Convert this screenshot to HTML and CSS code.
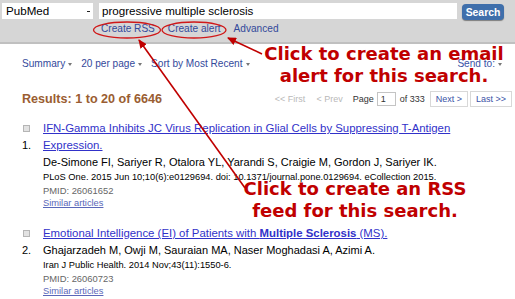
FILE: index.html
```html
<!DOCTYPE html>
<html lang="en">
<head>
    <meta charset="UTF-8">
    <title>PubMed - progressive multiple sclerosis</title>
    <link rel="stylesheet" href="styles.css">
</head>
<body>
    <div class="page">
        <div class="searchbar">
            <div class="search-row">
                <div class="db-select">PubMed<span class="db-caret"></span></div>
                <div class="search-input">progressive multiple sclerosis</div>
                <button class="search-btn">Search</button>
            </div>
            <div class="search-links">
                <a href="#">Create RSS</a>
                <a href="#">Create alert</a>
                <a href="#">Advanced</a>
            </div>
        </div>

        <div class="toolbar">
            <div class="display-opts">
                <a href="#">Summary<span class="caret"></span></a>
                <a href="#">20 per page<span class="caret"></span></a>
                <a href="#">Sort by Most Recent<span class="caret"></span></a>
            </div>
            <a href="#" class="send-to">Send to:<span class="caret"></span></a>
        </div>

        <div class="results-bar">
            <h3 class="result-count">Results: 1 to 20 of 6646</h3>
            <div class="pager">
                <span class="pager-off">&lt;&lt; First</span>
                <span class="pager-off">&lt; Prev</span>
                <span>Page</span>
                <span class="page-input">1</span>
                <span>of 333</span>
                <a href="#" class="pager-btn">Next &gt;</a>
                <a href="#" class="pager-btn">Last &gt;&gt;</a>
            </div>
        </div>

        <div class="rslt">
            <div class="rslt-side">
                <span class="chk"></span>
                <span class="num">1.</span>
            </div>
            <div class="rslt-body">
                <a href="#" class="title">IFN-Gamma Inhibits JC Virus Replication in Glial Cells by Suppressing T-Antigen Expression.</a>
                <p class="authors">De-Simone FI, Sariyer R, Otalora YL, Yarandi S, Craigie M, Gordon J, Sariyer IK.</p>
                <p class="source">PLoS One. 2015 Jun 10;10(6):e0129694. doi: 10.1371/journal.pone.0129694. eCollection 2015.</p>
                <p class="pmid">PMID: 26061652</p>
                <a href="#" class="similar">Similar articles</a>
            </div>
        </div>

        <div class="rslt">
            <div class="rslt-side">
                <span class="chk"></span>
                <span class="num">2.</span>
            </div>
            <div class="rslt-body">
                <a href="#" class="title">Emotional Intelligence (EI) of Patients with <b>Multiple Sclerosis</b> (MS).</a>
                <p class="authors">Ghajarzadeh M, Owji M, Sauraian MA, Naser Moghadasi A, Azimi A.</p>
                <p class="source">Iran J Public Health. 2014 Nov;43(11):1550-6.</p>
                <p class="pmid">PMID: 26060723</p>
                <a href="#" class="similar">Similar articles</a>
            </div>
        </div>

        <!-- annotation overlay -->
        <svg class="arrows" width="515" height="299" viewBox="0 0 515 299">
            <defs>
                <marker id="head" markerWidth="9" markerHeight="8" refX="8" refY="4" orient="auto" markerUnits="userSpaceOnUse">
                    <path d="M0,0 L9,4 L0,8 Z" fill="#c00000"/>
                </marker>
            </defs>
            <ellipse cx="127" cy="30" rx="33.5" ry="8" fill="none" stroke="#d01818" stroke-width="1.3"/>
            <ellipse cx="194" cy="30" rx="32" ry="8" fill="none" stroke="#d01818" stroke-width="1.3"/>
            <line x1="245" y1="188" x2="139" y2="40" stroke="#c00000" stroke-width="1.6" marker-end="url(#head)"/>
            <line x1="262" y1="54" x2="228" y2="38" stroke="#c00000" stroke-width="1.6" marker-end="url(#head)"/>
        </svg>
        <div class="note note-alert">Click to create an email<br>alert for this search.</div>
        <div class="note note-rss">Click to create an RSS<br>feed for this search.</div>
    </div>
</body>
</html>
```

FILE: styles.css
```css
body {
    margin: 0;
    font-family: "Liberation Sans", Arial, sans-serif;
    color: #000;
    background: #fff;
}
a {
    color: #33499b;
    text-decoration: none;
}
p {
    margin: 0;
}
.page {
    position: relative;
    width: 515px;
    height: 299px;
    overflow: hidden;
}

/* search bar */
.searchbar {
    height: 42px;
    background: #d6d6d6;
    border-bottom: 2px solid #c0c0c0;
}
.search-row {
    display: flex;
    align-items: flex-start;
    padding: 3px 0 0 2px;
}
.db-select {
    position: relative;
    width: 87px;
    height: 16px;
    padding-left: 4px;
    background: #fff;
    font-size: 11.6px;
    line-height: 16px;
}
.db-caret {
    position: absolute;
    right: 3px;
    top: 8px;
    width: 3px;
    height: 1px;
    border-top: 1px solid #222;
}
.search-input {
    width: 355px;
    height: 16px;
    margin-left: 6px;
    padding-left: 3px;
    background: #fff;
    font-size: 11.6px;
    line-height: 16px;
}
.search-btn {
    width: 42px;
    height: 16px;
    margin: 1px 0 0 5px;
    padding: 0;
    border: none;
    border-radius: 4px;
    background: #3f6fab;
    box-shadow: 0 1px 1px #7d7d7d;
    color: #fff;
    font-family: "Liberation Sans", Arial, sans-serif;
    font-weight: bold;
    font-size: 10.4px;
}
.search-links {
    display: flex;
    gap: 13px;
    padding: 2px 0 0 101px;
    font-size: 10.1px;
    line-height: 14px;
}

/* display options */
.toolbar {
    display: flex;
    justify-content: space-between;
    padding: 13px 13px 0 22px;
    font-size: 10.1px;
    line-height: 14px;
}
.display-opts {
    display: flex;
    gap: 9px;
}
.caret {
    display: inline-block;
    width: 0;
    height: 0;
    margin-left: 3px;
    vertical-align: middle;
    border-left: 2.5px solid transparent;
    border-right: 2.5px solid transparent;
    border-top: 3px solid #777;
}
.send-to {
    color: #3a52a6;
}

.results-bar {
    display: flex;
    justify-content: space-between;
    align-items: center;
    padding: 20px 3px 0 22px;
}
.result-count {
    margin: 0;
    color: #9a5d31;
    font-size: 12.6px;
    line-height: 16px;
}
.pager {
    display: flex;
    align-items: center;
    font-size: 9px;
    color: #333;
}
.pager-off {
    color: #b9b9b9;
    margin-right: 11px;
}
.pager-off + .pager-off {
    margin-right: 10px;
}
.page-input {
    width: 14px;
    height: 12px;
    margin: 0 4px 0 3px;
    padding-left: 3px;
    border: 1px solid #c4c4c4;
    line-height: 12px;
}
.pager-btn {
    margin-left: 5px;
    padding: 2px 5px;
    border: 1px solid #d8d8d8;
    color: #3a52a6;
    line-height: 10px;
}
.pager-btn + .pager-btn {
    margin-left: 2px;
}

/* results */
.rslt {
    display: flex;
    padding: 13px 0 0 22px;
}
.rslt + .rslt {
    padding-top: 15px;
}
.rslt-side {
    display: flex;
    flex-direction: column;
    width: 21px;
}
.chk {
    width: 5px;
    height: 5px;
    margin: 5px 0 0 1px;
    background: #e2e2e2;
    border: 1px solid #b5b5b5;
}
.num {
    margin-top: 5px;
    font-size: 11px;
    line-height: 17px;
}
.rslt-body {
    width: 445px;
}
.title {
    display: block;
    color: #3131c9;
    text-decoration: underline;
    font-size: 11.4px;
    line-height: 17px;
}
.authors {
    font-size: 11px;
    line-height: 16px;
}
.source {
    font-size: 9.3px;
    line-height: 14px;
}
.pmid {
    color: #666;
    font-size: 9.4px;
    line-height: 13px;
}
.similar {
    display: block;
    color: #5a67b9;
    text-decoration: underline;
    font-size: 9.3px;
    line-height: 13px;
}

/* annotations */
.arrows {
    position: absolute;
    left: 0;
    top: 0;
}
.note {
    position: absolute;
    color: #c00000;
    font-family: "DejaVu Sans", Verdana, sans-serif;
    font-weight: bold;
    font-size: 18px;
    line-height: 22px;
    text-align: center;
}
.note-alert {
    left: 261px;
    top: 43px;
    width: 246px;
}
.note-rss {
    left: 239px;
    top: 178px;
    width: 232px;
}
```
